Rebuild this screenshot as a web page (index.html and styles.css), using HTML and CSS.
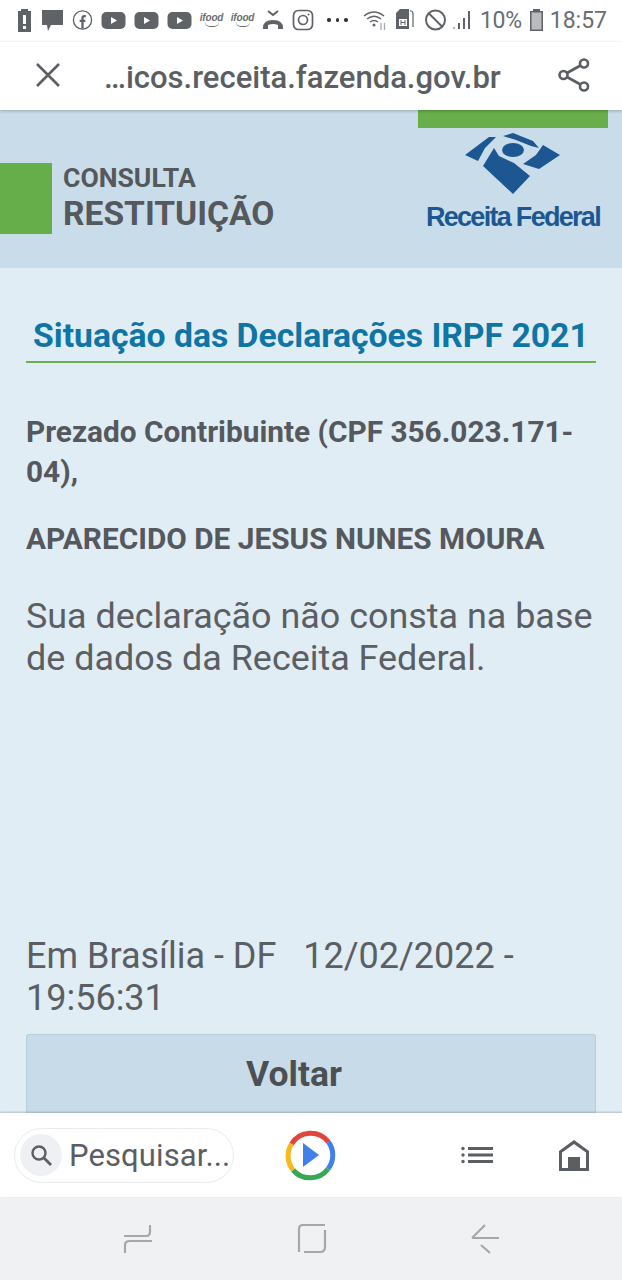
FILE: index.html
```html
<!DOCTYPE html>
<html lang="pt">
<head>
<meta charset="utf-8">
<title>Consulta Restituição</title>
<link rel="stylesheet" href="styles.css">
</head>
<body>
<div class="phone">
  <div class="statusbar">
    <div class="status-left">
      <svg class="i w16" viewBox="0 0 16 24"><path fill="#5f6266" d="M1 3h3V1h7v2h3v21H1z"/><rect x="6" y="7" width="3" height="9" fill="#fff"/><rect x="6" y="18" width="3" height="3" fill="#fff"/></svg>
      <svg class="i w23" viewBox="0 0 23 24"><path fill="#5f6266" d="M1 2h21v15H10l-3 6-1-6H1z"/></svg>
      <svg class="i w21" viewBox="0 0 22 24"><circle cx="11" cy="12" r="9.500" fill="none" stroke="#5f6266" stroke-width="1.400"/><path fill="none" stroke="#5f6266" stroke-width="2.400" d="M14.500 8h-1.500q-2 0-2 2v11M8 13h6"/></svg>
      <svg class="i w25" viewBox="0 0 25 24"><rect x="0.500" y="4" width="24" height="17" rx="5" fill="#5f6266"/><path fill="#fff" d="M10 9l6 3.500-6 3.500z"/></svg>
      <svg class="i w25" viewBox="0 0 25 24"><rect x="0.500" y="4" width="24" height="17" rx="5" fill="#5f6266"/><path fill="#fff" d="M10 9l6 3.500-6 3.500z"/></svg>
      <svg class="i w25" viewBox="0 0 25 24"><rect x="0.500" y="4" width="24" height="17" rx="5" fill="#5f6266"/><path fill="#fff" d="M10 9l6 3.500-6 3.500z"/></svg>
      <span class="ifood">ifood</span>
      <span class="ifood">ifood</span>
      <svg class="i w22" viewBox="0 0 22 24"><path fill="none" stroke="#5f6266" stroke-width="2" d="M6 3l5 4 5-4"/><path fill="#5f6266" d="M1 20q0-8 10-8t10 8v1h-5v-4q-5-2-10 0v4H1z"/></svg>
      <svg class="i w22" viewBox="0 0 22 24"><rect x="1.500" y="2.500" width="19" height="19" rx="5" fill="none" stroke="#5f6266" stroke-width="1.700"/><circle cx="11" cy="12" r="4.500" fill="none" stroke="#5f6266" stroke-width="1.700"/><circle cx="16.500" cy="6.500" r="1" fill="#5f6266"/></svg>
      <span class="dots"><b></b><b></b><b></b></span>
    </div>
    <div class="status-right">
      <svg class="i w26" viewBox="0 0 24 24"><g fill="none" stroke="#5f6266" stroke-width="1.500"><path d="M1 8q10-8 20 0"/><path d="M4 11q7-5.500 14 0"/><path d="M7 14q4-3 8 0"/></g><circle cx="11" cy="17" r="1.500" fill="#5f6266"/><path stroke="#a8abae" stroke-width="1.300" fill="none" d="M18 15v7M21.500 22v-7"/></svg>
      <svg class="i w19" viewBox="0 0 19 24"><path fill="#5f6266" d="M1 5l4-4h9v20H1z"/><path fill="none" stroke="#5f6266" stroke-width="1.200" d="M15 3h1q2 0 2 3v13"/><rect x="4" y="11" width="8" height="7" fill="#fff"/><path stroke="#5f6266" d="M6 12v5M10 12v5M6 14.500h4"/></svg>
      <svg class="i w23 no-icon" viewBox="0 0 23 24"><circle cx="11.500" cy="12" r="9.500" fill="none" stroke="#5f6266" stroke-width="2"/><path stroke="#5f6266" stroke-width="2" d="M5 5.500l13 13"/></svg>
      <svg class="i w21 signal" viewBox="0 0 21 24"><g fill="#5f6266"><rect x="1" y="19" width="2" height="2" fill="#b0b3b6"/><rect x="6" y="15" width="2" height="6"/><rect x="11" y="10" width="2" height="11"/><rect x="16" y="3" width="2" height="18"/></g></svg>
      <span class="pct">10%</span>
      <svg class="i w15" viewBox="0 0 15 24"><path fill="#5f6266" d="M4 1h7v2h3v20H1V3h3z"/><rect x="2.500" y="4.500" width="10" height="17" fill="#b9bbbd"/></svg>
      <span class="clock">18:57</span>
    </div>
  </div>

  <div class="toolbar">
    <svg class="close" viewBox="0 0 24 24"><path fill="none" stroke="#5b5e62" stroke-width="2.600" d="M1 1l22 22M23 1L1 23"/></svg>
    <div class="url">…icos.receita.fazenda.gov.br</div>
    <svg class="share" viewBox="0 0 32 34"><g fill="none" stroke="#5b5e62" stroke-width="2.600"><circle cx="26" cy="5.500" r="4"/><circle cx="5.500" cy="17" r="4"/><circle cx="26" cy="28.500" r="4"/><path d="M9 15l13.500-7.500M9 19l13.500 7.500"/></g></svg>
  </div>

  <header class="site-header">
    <div class="tab-row"><div class="green-tab"></div></div>
    <div class="brand-row">
      <div class="brand">
        <div class="green-block"></div>
        <div class="titles">
          <div class="kicker">CONSULTA</div>
          <div class="product">RESTITUIÇÃO</div>
        </div>
      </div>
      <div class="logo">
        <svg class="logo-mark" viewBox="0 0 96 61">
          <g fill="#1d5792">
            <path d="M0 22L24 4l7 0-11 11-7 13z"/>
            <path d="M38 3L48 0l20 8 6 7-8-2-15-6z"/>
            <ellipse cx="48" cy="17" rx="11" ry="7"/>
            <path d="M78 12l17 10-21 14-16-5 13-9z"/>
            <path d="M18 33l11-18 5 8 15 7 16 13-17 18z"/>
          </g>
        </svg>
        <div class="logo-text">Receita Federal</div>
      </div>
    </div>
  </header>

  <main class="content">
    <h1 class="title">Situação das Declarações IRPF 2021</h1>
    <p class="taxpayer">Prezado Contribuinte (CPF 356.023.171-04),</p>
    <p class="name">APARECIDO DE JESUS NUNES MOURA</p>
    <p class="message">Sua declaração não consta na base de dados da Receita Federal.</p>
    <p class="date">Em Brasília - DF &nbsp; 12/02/2022 - 19:56:31</p>
    <div class="btn">Voltar</div>
  </main>

  <div class="bottom-bar">
    <div class="search">
      <span class="search-ico"><svg viewBox="0 0 24 24"><circle cx="10" cy="10" r="6.500" fill="none" stroke="#5b5e62" stroke-width="2.400"/><path stroke="#5b5e62" stroke-width="2.800" d="M15 15l7 7"/></svg></span>
      <span class="search-text">Pesquisar...</span>
    </div>
    <svg class="play" viewBox="0 0 52 52">
      <g fill="none" stroke-width="5">
        <path stroke="#e0443a" d="M7.500 15A22.500 22.500 0 0 1 44.500 13"/>
        <path stroke="#3f80ec" d="M44.500 13A22.500 22.500 0 0 1 44 40"/>
        <path stroke="#36a852" d="M44 40A22.500 22.500 0 0 1 9 41"/>
        <path stroke="#f6b81a" d="M9 41A22.500 22.500 0 0 1 7.500 15"/>
      </g>
      <path fill="#3f80ec" d="M19 14l16 12-16 12z"/>
    </svg>
    <svg class="list" viewBox="0 0 32 18"><g fill="#5b5e62"><circle cx="2" cy="2.500" r="1.700"/><circle cx="2" cy="9" r="1.700"/><circle cx="2" cy="15.500" r="1.700"/><rect x="7" y="1" width="25" height="3"/><rect x="7" y="7.500" width="25" height="3"/><rect x="7" y="14" width="25" height="3"/></g></svg>
    <svg class="home" viewBox="0 0 30 32"><path fill="#5b5e62" fill-rule="evenodd" d="M15 1L30 12v20H0V12zM15 5L3 13.500V29h6V18h12v11h6V13.500z"/><rect x="9" y="18" width="12" height="11" fill="#5b5e62"/></svg>
  </div>

  <nav class="navbar">
    <svg class="nav-ico" viewBox="0 0 30 32"><path fill="none" stroke="#a5a8ab" stroke-width="2.200" d="M1 13h22q4 0 4-4V2M29 18H7q-5 0-5 4v8"/></svg>
    <svg class="nav-ico" viewBox="0 0 30 32"><path fill="none" stroke="#a5a8ab" stroke-width="2.200" d="M2 29V6q0-4 4-4h22M28 7v17q0 5-5 5H7"/></svg>
    <svg class="nav-ico" viewBox="0 0 30 32"><path fill="none" stroke="#a5a8ab" stroke-width="2.200" d="M14 2L2 14q-1 1 1 1h25M10 22l9 8"/></svg>
  </nav>
</div>
</body>
</html>
```

FILE: styles.css
```css
* { box-sizing: border-box; }
html, body { margin: 0; padding: 0; }
body { font-family: Roboto, "Liberation Sans", sans-serif; background: #fff; color: #55585c; }
.phone { width: 622px; height: 1280px; display: flex; flex-direction: column; overflow: hidden; }

.statusbar { height: 42px; padding: 7px 15px 0 17px; display: flex; justify-content: space-between; align-items: flex-start; background: #fff; }
.status-left, .status-right { display: flex; align-items: center; height: 26px; }
.status-left { gap: 8px; }
.status-right { gap: 7px; }
.i { height: 24px; flex: none; display: block; }
.w15 { width: 15px; }
.w16 { width: 16px; }
.w19 { width: 19px; }
.w21 { width: 21px; }
.w22 { width: 22px; }
.w23 { width: 23px; }
.w25 { width: 25px; }
.w26 { width: 26px; }
.no-icon { margin-left: 3px; }
.signal { margin-left: -2px; }
.ifood { display: flex; flex-direction: column; align-items: center; width: 23px; font: italic 700 10px/10px "Liberation Sans", sans-serif; color: #6b6e72; letter-spacing: -0.2px; }
.ifood::after { content: ""; display: block; width: 14px; height: 4px; margin-top: -1px; border-bottom: 1.500px solid #6b6e72; border-radius: 0 0 8px 8px; }
.dots { display: flex; gap: 5px; margin-left: 5px; }
.dots b { width: 3.500px; height: 3.500px; border-radius: 50%; background: #333; }
.pct { font-size: 23px; color: #6a6d71; letter-spacing: -0.3px; }
.clock { font-size: 23px; color: #6a6d71; margin-left: -1px; }

.toolbar { height: 68px; display: flex; align-items: center; padding: 0 32px 0 36px; background: #fff; position: relative; z-index: 1; box-shadow: 0 1px 3px rgba(0,0,0,.25); }
.close { width: 24px; height: 24px; flex: none; margin-top: -2px; }
.url { font-size: 31px; font-weight: 500; color: #5b5e62; margin: 3px 0 0 44px; flex: 1; white-space: nowrap; }
.share { width: 32px; height: 34px; flex: none; margin-top: -2px; }

.site-header { height: 158px; background: #c8dde9; display: flex; flex-direction: column; }
.tab-row { display: flex; justify-content: flex-end; padding-right: 14px; }
.green-tab { width: 190px; height: 18px; background: #68ae4b; }
.brand-row { display: flex; justify-content: space-between; padding: 0 22px 0 0; }
.brand { display: flex; align-items: flex-start; gap: 11px; padding-top: 35px; }
.green-block { width: 52px; height: 71px; background: #66ae4a; }
.kicker { font-size: 26.600px; line-height: 28px; font-weight: 700; color: #55585c; margin-top: 1px; }
.product { font-size: 33.600px; line-height: 36px; font-weight: 700; color: #55585c; margin-top: 4px; }
.logo { display: flex; flex-direction: column; align-items: center; padding-top: 5px; }
.logo-mark { width: 96px; height: 61px; display: block; }
.logo-text { font: 700 27px/30px "Liberation Sans", sans-serif; color: #1d5792; letter-spacing: -1.700px; margin-top: 8px; white-space: nowrap; }

.content { flex: 1; background: #e0edf4; padding: 0 26px; display: flex; flex-direction: column; }
.title { margin: 49px 0 0; padding: 0 0 6px 7px; font-size: 33.700px; line-height: 38px; font-weight: 700; color: #0f75a4; border-bottom: 2px solid #69b04e; white-space: nowrap; }
.taxpayer { margin: 49px 0 0; font-size: 29.800px; line-height: 40px; font-weight: 700; color: #55585c; }
.name { margin: 28px 0 0; font-size: 29.800px; line-height: 38px; font-weight: 700; color: #55585c; white-space: nowrap; }
.message { margin: 37px 0 0; font-size: 35.900px; line-height: 42px; font-weight: 400; color: #5b5e62; }
.date { margin: auto 0 0; font-size: 36px; line-height: 42px; color: #5b5e62; }
.btn { height: 79px; margin: 15px 0 0; padding-right: 34px; background: #c7dce8; border: 1px solid #b9ced9; border-bottom: 0; border-radius: 3px 3px 0 0; display: flex; align-items: center; justify-content: center; font-size: 35.500px; font-weight: 700; color: #4c4f53; }

.bottom-bar { height: 84px; background: #fff; display: flex; align-items: center; padding: 0 33px 0 14px; flex: none; box-shadow: 0 -1px 2px rgba(0,0,0,.2); position: relative; }
.search { width: 221px; height: 55px; border: 1.500px solid #e9ebee; border-radius: 28px; display: flex; align-items: center; padding-left: 5px; gap: 7px; }
.search-ico { width: 42px; height: 42px; border-radius: 50%; background: #eff0f3; display: flex; align-items: center; justify-content: center; flex: none; }
.search-ico svg { width: 24px; height: 24px; }
.search-text { font-size: 31px; color: #5b5e62; white-space: nowrap; letter-spacing: 0.1px; }
.play { width: 52px; height: 52px; margin-left: 50px; flex: none; }
.list { width: 32px; height: 18px; margin-left: 125px; flex: none; }
.home { width: 30px; height: 32px; margin-left: 66px; flex: none; }

.navbar { height: 83px; background: #f0f1f3; display: flex; align-items: center; gap: 144px; padding: 0 0 0 123px; flex: none; }
.nav-ico { width: 30px; height: 32px; flex: none; }
```
